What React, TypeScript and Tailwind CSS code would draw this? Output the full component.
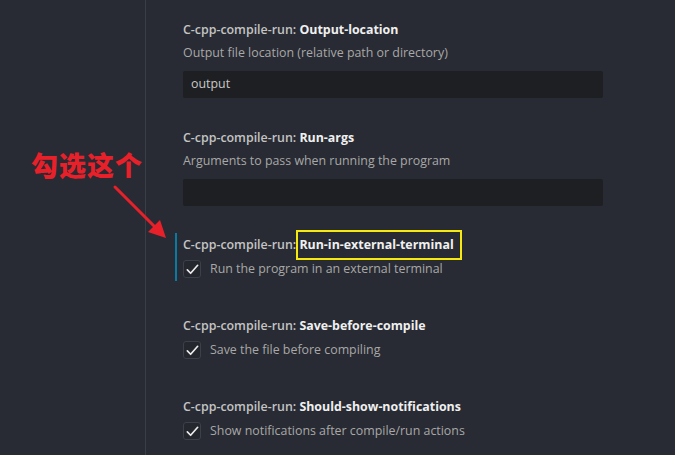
import React from "react";

type Setting = {
    key: string
    desc: string
    kind: "text" | "check"
    value?: string
    focused?: boolean
    marked?: boolean
}

const settings: Setting[] = [
    { key: "Output-location", desc: "Output file location (relative path or directory)", kind: "text", value: "output" },
    { key: "Run-args", desc: "Arguments to pass when running the program", kind: "text", value: "" },
    { key: "Run-in-external-terminal", desc: "Run the program in an external terminal", kind: "check", focused: true, marked: true },
    { key: "Save-before-compile", desc: "Save the file before compiling", kind: "check" },
    { key: "Should-show-notifications", desc: "Show notifications after compile/run actions", kind: "check" },
]

const Check = () => (
    <div className="w-[18px] h-[18px] rounded-[3px] border border-[#3c4049] bg-[#24272d] flex items-center justify-center shrink-0">
        <svg width="15" height="15" viewBox="0 0 16 16" fill="none">
            <path d="M2.5 8.5 L6 12 L13.5 3.5" stroke="#ececec" strokeWidth="1.8" strokeLinecap="round" strokeLinejoin="round" />
        </svg>
    </div>
)

const SettingItem = ({ s }: { s: Setting }) => (
    <div className="relative pl-[8px]">
        {s.focused && <div className="absolute left-0 top-[-3px] bottom-[-3px] w-[2px] bg-[#0a7aa3]" />}
        <div className="text-[12.4px] leading-[18px] text-[#c4c4c4] font-semibold whitespace-nowrap">
            C-cpp-compile-run:{" "}
            <span className="text-[#f0f0f0] font-bold relative">
                {s.key}
                {s.marked && <span className="absolute left-[-3px] right-[-8px] top-[-6px] bottom-[-7px] border-2 border-[#f5e90f]" />}
            </span>
        </div>
        {s.kind === "text" ? (
            <>
                <div className="mt-[5px] text-[12.4px] leading-[18px] text-[#a8a8a8]">{s.desc}</div>
                <div className="mt-[9px] w-[420px] h-[27px] bg-[#1e1f23] rounded-[2px] px-[8px] flex items-center text-[12.4px] text-[#c8c8c8]">{s.value}</div>
            </>
        ) : (
            <div className="mt-[6px] flex items-center gap-[9px]">
                <Check />
                <span className="text-[12.4px] leading-[18px] text-[#a8a8a8]">{s.desc}</span>
            </div>
        )}
    </div>
)

export default function App() {
    return (
        <div className="w-[675px] h-[455px] bg-[#282b33] flex overflow-hidden relative" style={{ fontFamily: '"Open Sans", "Noto Sans CJK SC", sans-serif' }}>
            <div className="w-[146px] shrink-0 border-r border-[#3a3e47] relative">
                <div className="absolute left-[31px] top-[145px] text-[27px] font-black text-[#e8202a] tracking-[1px]" style={{ fontFamily: '"Noto Sans CJK SC", sans-serif' }}>勾选这个</div>
                <svg className="absolute left-[110px] top-[182px]" width="60" height="62" viewBox="0 0 60 62">
                    <line x1="5" y1="5" x2="49" y2="49" stroke="#e8202a" strokeWidth="3" strokeLinecap="round" />
                    <polygon points="56,56 38,50 50,38" fill="#e8202a" />
                </svg>
            </div>
            <div className="flex flex-col pl-[29px] pt-[21px] gap-[31px]">
                <SettingItem s={settings[0]} />
                <SettingItem s={settings[1]} />
                <div className="mt-[-1px] flex flex-col gap-[39px]">
                    <SettingItem s={settings[2]} />
                    <SettingItem s={settings[3]} />
                    <SettingItem s={settings[4]} />
                </div>
            </div>
        </div>
    )
}
